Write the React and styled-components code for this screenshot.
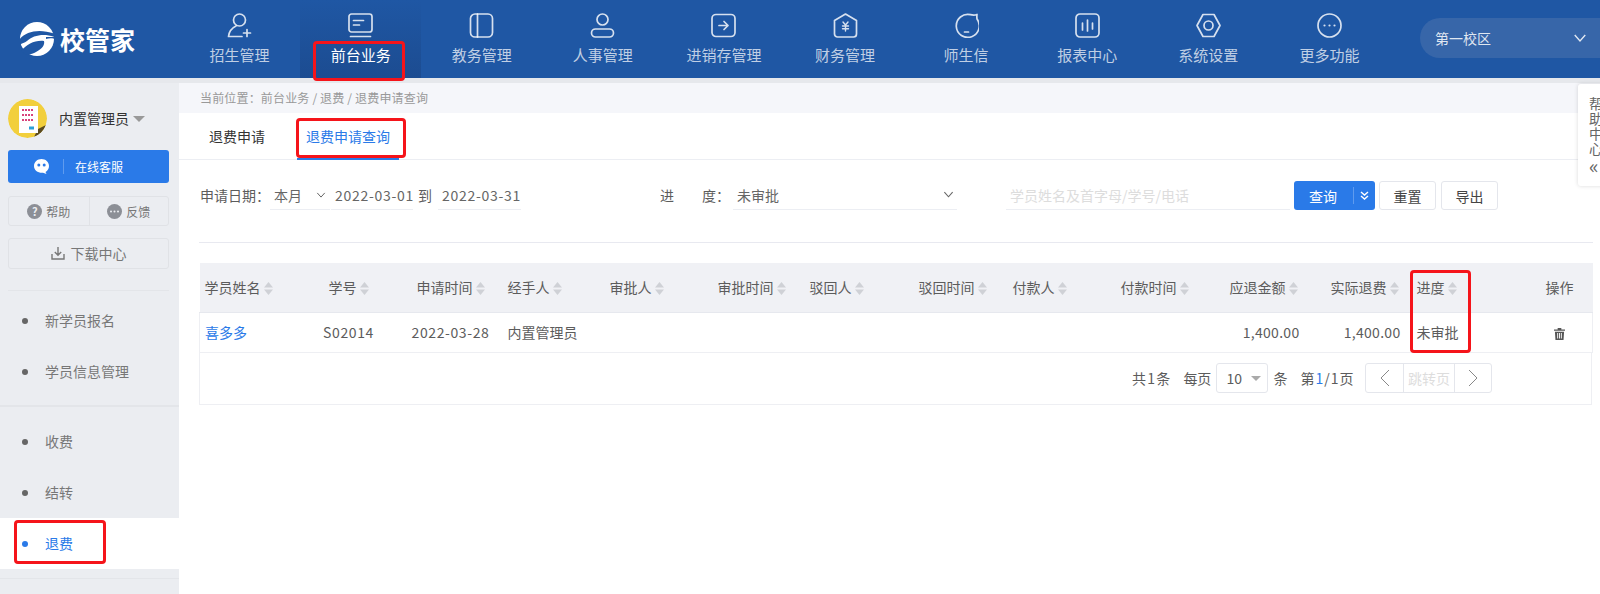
import React from 'react'
import styled, { createGlobalStyle } from 'styled-components'

const FONT = '"Noto Sans CJK SC", "Noto Sans", sans-serif'
const BLUE = '#2a7ae8'

const GlobalStyle = createGlobalStyle`
    html, body {
        margin: 0;
        padding: 0;
        background: #fff;
    }
    * {
        box-sizing: border-box;
    }
`

const Stroke = ({ children }) => (
    <svg width="25" height="25" viewBox="0 0 25 25" fill="none" stroke="currentColor" strokeWidth="1.7" strokeLinecap="round" strokeLinejoin="round">
        {children}
    </svg>
)

const navItems = [
    { label: '招生管理', icon: <Stroke><circle cx="12.500" cy="7" r="6" /><path d="M9 13C5 15 2 18.500 1.500 23.500H15" /><path d="M20 16.500v7M16.500 20h7" /></Stroke> },
    { label: '前台业务', active: true, icon: <Stroke><rect x="1" y="1" width="23" height="18" rx="2.500" /><path d="M5.500 7.500h10M5.500 12h6M2.500 23.500h20" /></Stroke> },
    { label: '教务管理', icon: <Stroke><rect x="1.500" y="1" width="22" height="23" rx="4.500" /><path d="M8.500 1v23" /></Stroke> },
    { label: '人事管理', icon: <Stroke><circle cx="12.500" cy="6.500" r="5.500" /><rect x="1.500" y="16" width="22" height="8" rx="4" /></Stroke> },
    { label: '进销存管理', icon: <Stroke><rect x="1" y="1.500" width="23" height="22" rx="4" /><path d="M8 12.500h9M13 8.500l4 4-4 4" /></Stroke> },
    { label: '财务管理', icon: <Stroke><path d="M12.500 1L23.500 7.500v13.500a3 3 0 0 1-3 3h-16a3 3 0 0 1-3-3V7.500z" /><path d="M10 9l2.500 3 2.500-3M9.500 13h6M9.500 15.800h6M12.500 12.500V18" strokeWidth="1.400" /></Stroke> },
    { label: '师生信', icon: <Stroke><path d="M23 1.500c-.2 1.500-.2 3 0 4.500a11.500 11.500 0 1 1-6.500-4.300c2.200.5 4.500.5 6.500-.2z" /><path d="M10.500 19h4" /></Stroke> },
    { label: '报表中心', icon: <Stroke><rect x="1" y="1" width="23" height="23" rx="4" /><path d="M7.500 10v7M12.500 7v11M17.500 10v6" /></Stroke> },
    { label: '系统设置', icon: <Stroke><path d="M7 1.500h11L24 12.500l-6 11H7l-6-11z" /><circle cx="12.500" cy="12.500" r="4.500" /></Stroke> },
    { label: '更多功能', icon: <Stroke><circle cx="12.500" cy="12.500" r="11.500" /><path d="M7.500 12.500h.01M12.500 12.500h.01M17.500 12.500h.01" strokeWidth="2.200" /></Stroke> },
]

const columns = [
    { label: '学员姓名', width: 98, edge: true },
    { label: '学号', width: 102, align: 'center' },
    { label: '申请时间', width: 102, align: 'center' },
    { label: '经手人', width: 102 },
    { label: '审批人', width: 108 },
    { label: '审批时间', width: 92 },
    { label: '驳回人', width: 109 },
    { label: '驳回时间', width: 94 },
    { label: '付款人', width: 108 },
    { label: '付款时间', width: 95 },
    { label: '应退金额', width: 100, align: 'right' },
    { label: '实际退费', width: 101, align: 'right' },
    { label: '进度', width: 120 },
    { label: '操作', width: 62, align: 'center', plain: true },
]

const SortIcon = () => (
    <SortSvg width="9" height="13" viewBox="0 0 9 13">
        <path d="M4.500 0L9 5.500H0z" />
        <path d="M0 7.500h9L4.500 13z" />
    </SortSvg>
)

const Chevron = ({ size = 12 }) => (
    <svg width={size} height={size} viewBox="0 0 12 12" fill="none" stroke="currentColor" strokeWidth="1.200">
        <path d="M1.500 3.500L6 8.500l4.500-5" />
    </svg>
)

const App = () => {
    return (
        <>
            <GlobalStyle />
            <Page>
                <Header>
                    <Logo>
                        <svg width="34" height="34" viewBox="0 0 34 34">
                            <circle cx="17" cy="17" r="17" fill="#fff" />
                            <path fill="#1f57a4" d="M-1 18C5 9 20 6 35 12v3C24 11 13 13 7 19 4 21 1 22-1 23z" />
                            <path fill="#1f57a4" d="M1 29C7 22 15 18 24 19c1 4-2 8-8 11-5 3-11 4-15-1z" />
                            <path fill="#1f57a4" d="M26 17c3-1 6-1 9 0v-2l-9 0z" />
                        </svg>
                        <LogoText>校管家</LogoText>
                    </Logo>
                    <Nav>
                        {navItems.map(item => (
                            <NavItem key={item.label} $active={item.active}>
                                {item.icon}
                                <span>{item.label}</span>
                            </NavItem>
                        ))}
                    </Nav>
                    <Campus>
                        <span>第一校区</span>
                        <Chevron size={14} />
                    </Campus>
                </Header>
                <Body>
                    <Sidebar>
                        <Profile>
                            <Avatar>
                                <svg width="39" height="39" viewBox="0 0 39 39">
                                    <circle cx="19.500" cy="19.500" r="19.500" fill="#f2cf3c" />
                                    <path d="M38 26a19.500 19.500 0 0 1-12 12L30 30z" fill="#5a4a20" />
                                    <rect x="11" y="7" width="19" height="27" fill="#fff" />
                                    <path d="M14 11h11M14 16h12M14 21h11" stroke="#d8427a" strokeWidth="2" strokeDasharray="2 1" />
                                    <path d="M21 29h5" stroke="#2aa0d8" strokeWidth="3" />
                                </svg>
                            </Avatar>
                            <ProfileName>内置管理员</ProfileName>
                            <ProfileCaret />
                        </Profile>
                        <ServiceButton>
                            <ServiceIcon>
                                <svg width="15" height="15" viewBox="0 0 15 15">
                                    <path fill="#fff" d="M7.500 0C11.500 0 15 2.800 15 7c0 2.800-1.500 4.800-3.500 6l1 2-3.500-1.200C4 14.200 0 11.500 0 7 0 2.800 3.500 0 7.500 0z" />
                                    <circle cx="4.800" cy="6" r="1.500" fill={BLUE} />
                                    <circle cx="10.200" cy="6" r="1.500" fill={BLUE} />
                                </svg>
                            </ServiceIcon>
                            <ServiceLabel>在线客服</ServiceLabel>
                        </ServiceButton>
                        <HelpRow>
                            <HelpCell>
                                <HelpDot>?</HelpDot>
                                帮助
                            </HelpCell>
                            <HelpCell>
                                <svg width="15" height="15" viewBox="0 0 15 15">
                                    <circle cx="7.500" cy="7.500" r="7.500" fill="#8c8f96" />
                                    <path d="M4 7.500h.01M7.500 7.500h.01M11 7.500h.01" stroke="#ebedf1" strokeWidth="2" strokeLinecap="round" />
                                </svg>
                                反馈
                            </HelpCell>
                        </HelpRow>
                        <DownloadButton>
                            <svg width="14" height="14" viewBox="0 0 14 14" fill="none" stroke="#777" strokeWidth="1.400">
                                <path d="M7 1v8M3.800 6L7 9.200 10.200 6M1 8v5h12V8" />
                            </svg>
                            下载中心
                        </DownloadButton>
                        <MenuGroup $topRule>
                            <MenuItem>新学员报名</MenuItem>
                            <MenuItem>学员信息管理</MenuItem>
                        </MenuGroup>
                        <MenuGroup $second>
                            <MenuItem>收费</MenuItem>
                            <MenuItem>结转</MenuItem>
                            <MenuItem $active>退费</MenuItem>
                        </MenuGroup>
                    </Sidebar>
                    <Main>
                        <Breadcrumb>当前位置：前台业务 / 退费 / 退费申请查询</Breadcrumb>
                        <Tabs>
                            <Tab>退费申请</Tab>
                            <Tab $active>退费申请查询</Tab>
                        </Tabs>
                        <Content>
                            <FilterRow>
                                <FilterLabel>申请日期：</FilterLabel>
                                <Field $width={60}>本月<Chevron size={10} /></Field>
                                <Field $width={82} $gap={1} $num>2022-03-01</Field>
                                <ToText>到</ToText>
                                <Field $width={83} $num>2022-03-31</Field>
                                <SpacedLabel><span>进</span><span>度：</span></SpacedLabel>
                                <Field $width={224} $gap={3}>未审批<SelectArrow><Chevron size={11} /></SelectArrow></Field>
                                <Field $width={284} $gap={49} $muted>学员姓名及首字母/学号/电话</Field>
                                <SearchButton>
                                    <span>查询</span>
                                    <SearchArrow>
                                        <svg width="11" height="11" viewBox="0 0 11 11" fill="none" stroke="#fff" strokeWidth="1.400">
                                            <path d="M2 2l3.500 3 3.500-3M2 6l3.500 3 3.500-3" />
                                        </svg>
                                    </SearchArrow>
                                </SearchButton>
                                <PlainButton $gap={4}>重置</PlainButton>
                                <PlainButton $gap={5}>导出</PlainButton>
                            </FilterRow>
                            <Rule />
                            <DataTable>
                                <colgroup>
                                    {columns.map(col => <col key={col.label} width={col.width} />)}
                                </colgroup>
                                <thead>
                                    <tr>
                                        {columns.map(col => (
                                            <Th key={col.label} $align={col.align} $plain={col.plain}>
                                                {col.label}
                                                {!col.plain && <SortIcon />}
                                            </Th>
                                        ))}
                                    </tr>
                                </thead>
                                <tbody>
                                    <tr>
                                        <Td><StudentLink>喜多多</StudentLink></Td>
                                        <Td $align="center" $spread={0.6}>S02014</Td>
                                        <Td $align="center" $spread={0.6}>2022-03-28</Td>
                                        <Td>内置管理员</Td>
                                        <Td /><Td /><Td /><Td /><Td /><Td />
                                        <Td $align="right" $spread={0.3}>1,400.00</Td>
                                        <Td $align="right" $spread={0.3}>1,400.00</Td>
                                        <Td>未审批</Td>
                                        <Td $align="center" $plain>
                                            <svg width="11" height="12" viewBox="0 0 12 13" fill="#555">
                                                <path d="M4 0h4v1.500h4V3H0V1.500h4zM1 4h10l-.6 9H1.600zM3.500 5.500v6h1v-6zM5.500 5.500v6h1v-6zM7.500 5.500v6h1v-6z" fillRule="evenodd" />
                                            </svg>
                                        </Td>
                                    </tr>
                                </tbody>
                            </DataTable>
                            <Pagination>
                                <PageText $spread={1.200}>共1条</PageText>
                                <PageText $gap={12}>每页</PageText>
                                <PageSize>10<PageCaret /></PageSize>
                                <PageText $gap={5}>条</PageText>
                                <PageText $gap={13} $spread={1}>第<CurrentPage>1</CurrentPage>/1页</PageText>
                                <Pager>
                                    <PagerArrow><svg width="12" height="18" viewBox="0 0 12 18" fill="none" stroke="#888" strokeWidth="1"><path d="M10 1L2 9l8 8" /></svg></PagerArrow>
                                    <PagerJump>跳转页</PagerJump>
                                    <PagerArrow><svg width="12" height="18" viewBox="0 0 12 18" fill="none" stroke="#888" strokeWidth="1"><path d="M2 1l8 8-8 8" /></svg></PagerArrow>
                                </Pager>
                            </Pagination>
                        </Content>
                    </Main>
                </Body>
                <HelpTab>
                    <HelpWords>帮助中心</HelpWords>
                    <HelpArrows>«</HelpArrows>
                </HelpTab>
                <Mark $left={313} $top={41} $width={92} $height={40} />
                <Mark $left={296} $top={118} $width={110} $height={40} />
                <Mark $left={1410} $top={270} $width={61} $height={83} />
                <Mark $left={14} $top={520} $width={92} $height={44} />
            </Page>
        </>
    )
}

const Page = styled.div`
    position: relative;
    width: 1600px;
    height: 594px;
    overflow: hidden;
    background: #e6e8ec;
    font-family: ${FONT};
    font-size: 14px;
    color: #5c5c5c;
`

const Mark = styled.div`
    position: absolute;
    left: ${p => p.$left}px;
    top: ${p => p.$top}px;
    width: ${p => p.$width}px;
    height: ${p => p.$height}px;
    border: 3px solid #f5141a;
    border-radius: 4px;
`

const Header = styled.header`
    display: flex;
    align-items: stretch;
    height: 78px;
    background: #1f57a4;
`

const Logo = styled.div`
    display: flex;
    align-items: center;
    gap: 6px;
    width: 179px;
    padding-left: 20px;
    color: #fff;
`

const LogoText = styled.span`
    font-size: 25px;
    font-weight: 700;
    line-height: 1;
`

const Nav = styled.nav`
    display: flex;
`

const NavItem = styled.div`
    display: flex;
    flex-direction: column;
    align-items: center;
    width: 121.1px;
    padding-top: 13px;
    gap: 6px;
    font-size: 15px;
    line-height: 22px;
    white-space: nowrap;
    color: ${p => (p.$active ? '#fff' : 'rgba(255, 255, 255, 0.72)')};
    background: ${p => (p.$active ? 'linear-gradient(#1f57a4, #1c4c91)' : 'transparent')};
    svg {
        color: rgba(255, 255, 255, 0.82);
    }
`

const Campus = styled.div`
    display: flex;
    align-items: center;
    justify-content: space-between;
    margin: 18px 0 20px auto;
    width: 180px;
    padding: 0 13px 0 15px;
    border-radius: 20px 0 0 20px;
    background: #3766a9;
    color: rgba(255, 255, 255, 0.85);
`

const Body = styled.div`
    display: flex;
    height: 511px;
    margin-top: 5px;
`

const Sidebar = styled.aside`
    width: 179px;
    flex: none;
    padding-top: 15px;
    background: #ebedf1;
`

const Profile = styled.div`
    display: flex;
    align-items: center;
    height: 40px;
    padding-left: 8px;
`

const Avatar = styled.div`
    width: 39px;
    height: 39px;
    flex: none;
    border-radius: 50%;
    overflow: hidden;
`

const ProfileName = styled.span`
    margin-left: 12px;
    color: #333;
`

const ProfileCaret = styled.i`
    margin: 2px 0 0 4px;
    border: 6px solid transparent;
    border-top: 6px solid #999;
    border-bottom: 0;
`

const ServiceButton = styled.div`
    display: flex;
    align-items: center;
    height: 33px;
    margin: 12px 10px 0 8px;
    border-radius: 3px;
    background: ${BLUE};
    color: #fff;
    font-size: 12px;
`

const ServiceIcon = styled.span`
    display: flex;
    align-items: center;
    justify-content: center;
    width: 56px;
    height: 15px;
    padding-left: 16px;
    padding-right: 4px;
    border-right: 1px solid rgba(255, 255, 255, 0.25);
`

const ServiceLabel = styled.span`
    margin-left: 11px;
`

const HelpRow = styled.div`
    display: grid;
    grid-template-columns: 1fr 1fr;
    height: 30px;
    margin: 13px 10px 0 8px;
    border: 1px solid #e0e2e6;
    border-radius: 3px;
`

const HelpCell = styled.div`
    display: flex;
    align-items: center;
    justify-content: center;
    gap: 4px;
    font-size: 12px;
    color: #777;
    & + & {
        border-left: 1px solid #e0e2e6;
    }
`

const HelpDot = styled.span`
    display: flex;
    align-items: center;
    justify-content: center;
    width: 15px;
    height: 15px;
    border-radius: 50%;
    background: #8c8f96;
    color: #ebedf1;
    font-size: 11px;
    font-weight: 700;
`

const DownloadButton = styled.div`
    display: flex;
    align-items: center;
    justify-content: center;
    gap: 6px;
    height: 31px;
    padding-bottom: 1px;
    margin: 12px 10px 0 8px;
    border: 1px solid #e0e2e6;
    border-radius: 3px;
    color: #777;
`

const MenuGroup = styled.div`
    padding: ${p => (p.$second ? '9px 0' : '4px 0 8px')};
    margin-top: ${p => (p.$second ? '0' : '21px')};
    border-top: 1px solid ${p => (p.$second ? '#e3e5e9' : 'transparent')};
    border-bottom: 1px solid #e3e5e9;
    position: relative;
    ${p => p.$topRule && `
        &::before {
            content: '';
            position: absolute;
            top: -1px;
            left: 8px;
            right: 10px;
            height: 1px;
            background: #e3e5e9;
        }
    `}
`

const MenuItem = styled.div`
    position: relative;
    height: 51px;
    line-height: 51px;
    padding-left: 45px;
    color: ${p => (p.$active ? BLUE : '#777')};
    background: ${p => (p.$active ? '#fff' : 'transparent')};
    &::before {
        content: '';
        position: absolute;
        left: 22px;
        top: 23px;
        width: 6px;
        height: 6px;
        border-radius: 50%;
        background: ${p => (p.$active ? BLUE : '#666')};
    }
`

const Main = styled.main`
    flex: 1;
    background: #fff;
`

const Breadcrumb = styled.div`
    height: 30px;
    line-height: 30px;
    padding-left: 21px;
    background: #f5f6fa;
    font-size: 12px;
    letter-spacing: 0.17px;
    color: #999;
`

const Tabs = styled.div`
    display: flex;
    gap: 23px;
    height: 47px;
    padding-left: 21px;
    border-bottom: 1px solid #eceef3;
`

const Tab = styled.div`
    height: 47px;
    line-height: 46px;
    padding: 0 9px;
    color: ${p => (p.$active ? BLUE : '#333')};
    border-bottom: 2px solid ${p => (p.$active ? BLUE : 'transparent')};
`

const Content = styled.div`
    padding: 21px 8px 0 20px;
`

const FilterRow = styled.div`
    display: flex;
    align-items: stretch;
    height: 29px;
`

const FilterLabel = styled.span`
    width: 71px;
    padding-left: 1px;
    line-height: 28px;
`

const SpacedLabel = styled.span`
    display: flex;
    justify-content: space-between;
    width: 70px;
    margin-left: 139px;
    line-height: 28px;
`

const Field = styled.div`
    display: flex;
    align-items: center;
    justify-content: space-between;
    width: ${p => p.$width}px;
    margin-left: ${p => p.$gap || 0}px;
    padding: 0 4px 1px;
    border-bottom: 1px solid #eceef3;
    white-space: nowrap;
    letter-spacing: ${p => (p.$num ? '0.7px' : '0')};
    color: ${p => (p.$muted ? '#ddd' : '#666')};
`

const SelectArrow = styled.span`
    display: flex;
    margin-right: -1px;
`

const ToText = styled.span`
    width: 25px;
    padding-left: 5px;
    line-height: 28px;
`

const SearchButton = styled.div`
    display: flex;
    align-items: center;
    width: 81px;
    margin-left: 4px;
    padding-left: 15px;
    border-radius: 3px;
    background: ${BLUE};
    color: #fff;
`

const SearchArrow = styled.span`
    display: flex;
    align-items: center;
    justify-content: center;
    width: 22px;
    height: 17px;
    margin-left: auto;
    border-left: 1px solid rgba(255, 255, 255, 0.25);
`

const PlainButton = styled.div`
    display: flex;
    align-items: center;
    justify-content: center;
    width: 57px;
    margin-left: ${p => p.$gap}px;
    border: 1px solid #e4e6ec;
    border-radius: 3px;
    color: #444;
`

const Rule = styled.div`
    height: 1px;
    margin: 32px 0 20px;
    background: #e8e9f0;
`

const cellPadding = p => {
    if (p.$align === 'right') return '0 10px 0 0'
    if (p.$plain) return '0 9px 0 5px'
    return '0 6px'
}

const DataTable = styled.table`
    width: 1393px;
    table-layout: fixed;
    border-collapse: collapse;
`

const Th = styled.th`
    height: 49px;
    padding: ${p => (p.$align === 'right' ? '0 12px 0 0' : cellPadding(p))};
    background: #f0f1f5;
    border-bottom: 1px solid #e6e8ee;
    font-weight: 400;
    white-space: nowrap;
    text-align: ${p => p.$align || 'left'};
    &:first-child {
        padding-left: 5px;
    }
`

const Td = styled.td`
    height: 40px;
    padding: ${cellPadding};
    border-bottom: 1px solid #eeeff3;
    white-space: nowrap;
    letter-spacing: ${p => p.$spread || 0}px;
    text-align: ${p => p.$align || 'left'};
    &:first-child {
        padding-left: 5px;
        border-left: 1px solid #eeeff3;
    }
    &:last-child {
        border-right: 1px solid #eeeff3;
    }
    svg {
        vertical-align: -2px;
    }
`

const SortSvg = styled.svg`
    margin-left: 3px;
    vertical-align: -2px;
    fill: #cfd1d6;
`

const StudentLink = styled.span`
    color: ${BLUE};
`

const Pagination = styled.div`
    display: flex;
    align-items: center;
    width: 1393px;
    height: 52px;
    padding-left: 932px;
    border: 1px solid #eeeff3;
    border-top: 0;
    white-space: nowrap;
`

const PageText = styled.span`
    margin-left: ${p => p.$gap || 0}px;
    letter-spacing: ${p => p.$spread || 0}px;
`

const PageSize = styled.div`
    display: flex;
    align-items: center;
    width: 52px;
    height: 30px;
    margin-left: 5px;
    padding-left: 9px;
    border: 1px solid #e4e6ec;
    border-radius: 3px;
`

const PageCaret = styled.i`
    margin-left: 9px;
    border: 5px solid transparent;
    border-top: 5px solid #aaa;
    border-bottom: 0;
`

const CurrentPage = styled.span`
    color: ${BLUE};
`

const Pager = styled.div`
    display: flex;
    width: 127px;
    height: 30px;
    margin-left: 11px;
    border: 1px solid #e4e6ec;
    border-radius: 3px;
`

const PagerArrow = styled.span`
    display: flex;
    align-items: center;
    justify-content: center;
    width: 37px;
`

const PagerJump = styled.span`
    width: 52px;
    line-height: 28px;
    text-align: center;
    color: #ddd;
    border: solid #e4e6ec;
    border-width: 0 1px;
`

const HelpTab = styled.div`
    position: absolute;
    top: 84px;
    left: 1578px;
    width: 40px;
    height: 102px;
    padding: 12px 0 0 11px;
    background: #fff;
    border-radius: 3px 0 0 3px;
    box-shadow: 0 0 4px rgba(0, 0, 0, 0.15);
    font-size: 14px;
    line-height: 15px;
    color: #666;
`

const HelpWords = styled.span`
    display: block;
    width: 14px;
`

const HelpArrows = styled.span`
    display: block;
    margin-top: 0;
    font-size: 20px;
    line-height: 20px;
`

export default App
